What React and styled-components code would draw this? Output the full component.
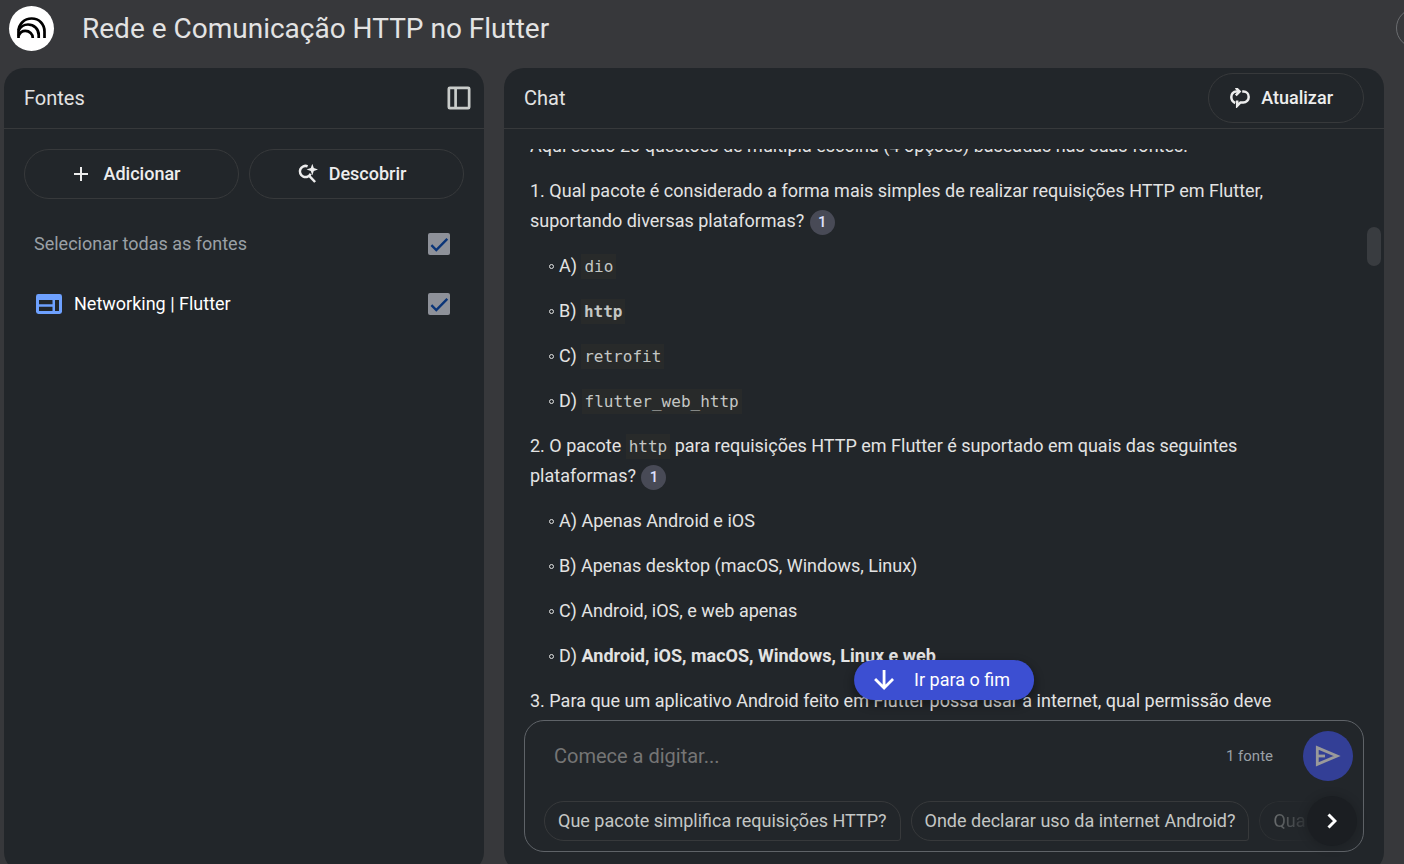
import React from "react";
import styled, { createGlobalStyle } from "styled-components";

const Global = createGlobalStyle`
  *, *::before, *::after { box-sizing: border-box; }
  body {
    margin: 0;
    overflow: hidden;
    background: #37383b;
    color: #e3e3e3;
    font: 400 18px/30px Roboto, "Open Sans", sans-serif;
  }
  button, input { font: inherit; color: inherit; }
  h1, h2, p, ul { margin: 0; padding: 0; font-weight: 400; }
  svg { display: block; flex: none; }
`;

const Shell = styled.div`
  display: flex;
  flex-direction: column;
  height: calc(100vh + 8px);
`;

const TopBar = styled.header`
  display: flex;
  align-items: center;
  height: 56px;
  margin-bottom: 12px;
  padding-left: 9px;
  overflow: hidden;
`;

const Brand = styled.a`
  display: grid;
  place-items: center;
  width: 45px;
  height: 45px;
  border-radius: 50%;
  background: #fff;
`;

const Title = styled.h1`
  flex: 1;
  margin-left: 28px;
  padding-top: 2px;
  font-size: 28px;
  line-height: 36px;
`;

const Avatar = styled.button`
  width: 40px;
  height: 40px;
  margin-right: -32px;
  border: 1px solid #6b6d70;
  border-radius: 50%;
  background: none;
`;

const Columns = styled.main`
  flex: 1;
  min-height: 0;
  display: grid;
  grid-template-columns: 480px minmax(0, 1fr);
  gap: 20px;
  padding: 0 20px 0 4px;
`;

const Panel = styled.section`
  position: relative;
  display: flex;
  flex-direction: column;
  min-height: 0;
  border-radius: 20px;
  background: #22262a;
`;

const PanelHead = styled.div`
  display: flex;
  align-items: center;
  justify-content: space-between;
  height: 61px;
  padding: 0 20px;
  border-bottom: 1px solid #37393b;
`;

const PanelTitle = styled.h2`
  font-size: 20px;
`;

const IconButton = styled.button`
  display: grid;
  place-items: center;
  width: 30px;
  height: 30px;
  margin-right: -10px;
  padding: 0;
  border: 0;
  background: none;
  color: #c9ccca;
`;

const PillButton = styled.button`
  display: flex;
  align-items: center;
  justify-content: center;
  gap: ${(p) => p.$gap || 10}px;
  height: 50px;
  padding: 0 30px 0 21px;
  border: 1px solid #37393b;
  border-radius: 25px;
  background: none;
  color: #ededed;
  font-weight: 500;
`;

const Actions = styled.div`
  display: grid;
  grid-template-columns: 1fr 1fr;
  gap: 10px;
  padding: 20px 20px 15px;
`;

const SourceRow = styled.label`
  display: flex;
  align-items: center;
  height: 60px;
  padding: 0 34px 0 ${(p) => (p.$muted ? 30 : 32)}px;
  color: ${(p) => (p.$muted ? "#9aa0a6" : "#fff")};
`;

const SourceName = styled.span`
  flex: 1;
  margin-left: ${(p) => (p.$indent ? 12 : 0)}px;
`;

const CheckWrap = styled.span`
  display: grid;
  width: 22px;
  height: 22px;
  & > * { grid-area: 1 / 1; }
  svg { pointer-events: none; }
`;

const CheckInput = styled.input`
  appearance: none;
  width: 22px;
  height: 22px;
  margin: 0;
  border-radius: 2px;
  background: #8e9199;
`;

const ChatBody = styled.div`
  flex: 1;
  min-height: 0;
  display: flex;
  margin-top: 20px;
  padding: 0 3px 0 26px;
`;

const Messages = styled.div`
  flex: 1;
  min-width: 0;
  display: flex;
  flex-direction: column;
  justify-content: flex-end;
  gap: 15px;
  padding: 0 90px 4px 0;
  overflow: hidden;
`;

const Options = styled.ul`
  display: flex;
  flex-direction: column;
  gap: 15px;
  padding-left: 19px;
  list-style: none;
`;

const OptionItem = styled.li`
  display: flex;
  align-items: center;
  gap: 5px;
  height: 30px;
  &::before {
    content: "";
    width: 5px;
    height: 5px;
    border: 1px solid #e3e3e3;
    border-radius: 50%;
  }
`;

const Code = styled.code`
  padding: 3px;
  background: #282a2a;
  color: #c4c7c5;
  font-family: "DejaVu Sans Mono", monospace;
  font-size: 16px;
  line-height: 20px;
`;

const Citation = styled.button`
  width: 25px;
  height: 25px;
  margin-left: 1px;
  padding: 0;
  border: 0;
  border-radius: 50%;
  background: #484a56;
  color: #dfe1ff;
  font-size: 15px;
  font-weight: 500;
  line-height: 25px;
  vertical-align: middle;
`;

const Rail = styled.div`
  width: 14px;
  padding-top: 78px;
`;

const Thumb = styled.div`
  height: 39px;
  border-radius: 7px;
  background: #393c40;
`;

const JumpButton = styled.button`
  position: absolute;
  left: 50%;
  bottom: 172px;
  transform: translateX(-50%);
  display: flex;
  align-items: center;
  gap: 20px;
  height: 40px;
  padding: 0 24px 0 20px;
  border: 0;
  border-radius: 20px;
  background: #3c4fd2;
  color: #fff;
  box-shadow: 0 4px 8px 2px rgba(0, 0, 0, 0.3);
  white-space: nowrap;
`;

const Composer = styled.form`
  height: 132px;
  margin: 0 20px 20px;
  padding: 10px 10px 10px 19px;
  border: 1px solid #5f6368;
  border-radius: 20px;
`;

const EntryRow = styled.div`
  display: flex;
  align-items: center;
  height: 50px;
  margin-bottom: 20px;
`;

const Entry = styled.input`
  flex: 1;
  min-width: 0;
  height: 40px;
  padding: 0 10px;
  border: 0;
  outline: 0;
  background: none;
  font-size: 20px;
  &::placeholder { color: #757575; opacity: 1; }
`;

const SourceCount = styled.span`
  margin-right: 30px;
  color: #9aa0a6;
  font-size: 15px;
`;

const Send = styled.button`
  display: grid;
  place-items: center;
  width: 50px;
  height: 50px;
  padding: 0;
  border: 0;
  border-radius: 50%;
  background: #333f96;
  color: #9a9a9a;
`;

const Suggestions = styled.div`
  position: relative;
  display: flex;
  gap: 10px;
  height: 40px;
`;

const Chip = styled.button`
  flex: none;
  height: 40px;
  padding: 0 13px;
  border: 1px solid #37393b;
  border-radius: 20px 20px 3px 20px;
  background: none;
  color: #c4c7c5;
  white-space: nowrap;
`;

const LastChip = styled(Chip)`
  flex: 1 1 0;
  min-width: 0;
  overflow: hidden;
  text-align: left;
  border-right: 0;
  mask-image: linear-gradient(90deg, rgba(0, 0, 0, 0.6), transparent 56px);
`;

const NextButton = styled.button`
  position: absolute;
  right: -4px;
  top: -5px;
  display: grid;
  place-items: center;
  width: 50px;
  height: 50px;
  padding: 0;
  border: 0;
  border-radius: 50%;
  background: #1b1e22;
  color: #fff;
  box-shadow: 0 1px 8px 3px rgba(0, 0, 0, 0.12);
`;

function Option({ children }) {
  return (
    <OptionItem>
      <span>{children}</span>
    </OptionItem>
  );
}

function Check(props) {
  return (
    <CheckWrap>
      <CheckInput type="checkbox" defaultChecked {...props} />
      <svg width="22" height="22" viewBox="0 0 22 22" fill="none" stroke="#0b3578" strokeWidth="2.4">
        <path d="M3.4 12.2 8.3 17 19.3 5.8" />
      </svg>
    </CheckWrap>
  );
}

export default function App() {
  return (
    <Shell>
      <Global />
      <TopBar>
        <Brand href="#" aria-label="NotebookLM">
          <svg width="29" height="22" viewBox="0 0 29 22" fill="none" stroke="#000" strokeWidth="2.7">
            <path d="M1.500 21V14.500C1.500 7 7.300 1.500 14.700 1.500S27.500 7 27.500 14.500V21" />
            <path d="M1.500 13.500C3.600 9.600 7 7.500 11 7.500c6 0 10.700 4.400 10.700 10.400V21" />
            <path d="M1.500 19C2.800 15.700 5.200 13.900 8.300 13.900c4.300 0 7.500 3 7.500 7.100" />
          </svg>
        </Brand>
        <Title>Rede e Comunicação HTTP no Flutter</Title>
        <Avatar aria-label="Conta" />
      </TopBar>
      <Columns>
        <Panel>
          <PanelHead>
            <PanelTitle>Fontes</PanelTitle>
            <IconButton aria-label="Recolher painel">
              <svg width="24" height="24" viewBox="0 0 24 24" fill="none" stroke="currentColor" strokeWidth="2.700">
                <rect x="1.850" y="1.850" width="20.300" height="20.300" rx="1" />
                <path d="M8.600 2v20" />
              </svg>
            </IconButton>
          </PanelHead>
          <Actions>
            <PillButton $gap={16}>
              <svg width="14" height="14" viewBox="0 0 14 14" stroke="currentColor" strokeWidth="2">
                <path d="M7 0v14M0 7h14" />
              </svg>
              Adicionar
            </PillButton>
            <PillButton $gap={11}>
              <svg width="20" height="20" viewBox="0 0 20 20" fill="none" stroke="currentColor" strokeWidth="2.500">
                <path d="M9.600 2.300A5.600 5.600 0 1 0 12.600 9.800" />
                <path d="m10.800 11.400 6.300 6.600" />
                <path d="M14.300-.2l1.500 4.300 4.200 1.500-4.200 1.500-1.500 4.200-1.500-4.200L8.600 5.600l4.200-1.500z" fill="currentColor" stroke="none" />
              </svg>
              Descobrir
            </PillButton>
          </Actions>
          <SourceRow $muted>
            <SourceName>Selecionar todas as fontes</SourceName>
            <Check />
          </SourceRow>
          <SourceRow>
            <svg width="26" height="20" viewBox="0 0 26 20">
              <rect width="26" height="20" rx="2.400" fill="#6ea1ff" />
              <path d="M3 6h13.500v4.200H3zM3 12.800h13.500v4.200H3zM19 6h4v11h-4z" fill="#22262a" />
            </svg>
            <SourceName $indent>Networking | Flutter</SourceName>
            <Check />
          </SourceRow>
        </Panel>
        <Panel>
          <PanelHead>
            <PanelTitle>Chat</PanelTitle>
            <PillButton $gap={11}>
              <svg width="20" height="20" viewBox="0 0 20 20" fill="none" stroke="currentColor" strokeWidth="2.500">
                <path d="M5.200 15C2.700 13.800 1.300 11.800 1.300 9c0-3 2.100-5.400 5-5.400H9" />
                <path d="m5.800-.2 3.800 3.800-3.800 3.800" />
                <path d="M12.200 3.600h1.300c3 0 5.200 2.300 5.200 5.300s-2.400 5.500-5.400 5.500H10.500L7.200 17.800V12.500" />
              </svg>
              Atualizar
            </PillButton>
          </PanelHead>
          <ChatBody>
            <Messages>
              <p>Aqui estão 20 questões de múltipla escolha (4 opções) baseadas nas suas fontes:</p>
              <p>
                1. Qual pacote é considerado a forma mais simples de realizar requisições HTTP em Flutter,
                suportando diversas plataformas? <Citation>1</Citation>
              </p>
              <Options>
                <Option>A) <Code>dio</Code></Option>
                <Option>B) <Code><b>http</b></Code></Option>
                <Option>C) <Code>retrofit</Code></Option>
                <Option>D) <Code>flutter_web_http</Code></Option>
              </Options>
              <p>
                2. O pacote <Code>http</Code> para requisições HTTP em Flutter é suportado em quais das seguintes
                plataformas? <Citation>1</Citation>
              </p>
              <Options>
                <Option>A) Apenas Android e iOS</Option>
                <Option>B) Apenas desktop (macOS, Windows, Linux)</Option>
                <Option>C) Android, iOS, e web apenas</Option>
                <Option>D) <b>Android, iOS, macOS, Windows, Linux e web</b></Option>
              </Options>
              <p>3. Para que um aplicativo Android feito em Flutter possa usar a internet, qual permissão deve</p>
            </Messages>
            <Rail>
              <Thumb />
            </Rail>
          </ChatBody>
          <JumpButton>
            <svg width="20" height="20" viewBox="0 0 20 20" fill="none" stroke="currentColor" strokeWidth="2.800">
              <path d="M10 0v18M1 9l9 9 9-9" />
            </svg>
            Ir para o fim
          </JumpButton>
          <Composer>
            <EntryRow>
              <Entry placeholder="Comece a digitar..." aria-label="Caixa de consulta" />
              <SourceCount>1 fonte</SourceCount>
              <Send type="button" aria-label="Enviar">
                <svg width="26" height="22" viewBox="0 0 26 22" fill="none" stroke="currentColor" strokeWidth="2.800">
                  <path d="M2.300 2.700v16.600L22 11z" />
                  <path d="M2.500 11H10" />
                </svg>
              </Send>
            </EntryRow>
            <Suggestions>
              <Chip type="button">Que pacote simplifica requisições HTTP?</Chip>
              <Chip type="button">Onde declarar uso da internet Android?</Chip>
              <LastChip type="button">Qua</LastChip>
              <NextButton type="button" aria-label="Próximo">
                <svg width="10" height="16" viewBox="0 0 10 16" fill="none" stroke="currentColor" strokeWidth="3">
                  <path d="m1.500 1.500 6.500 6.500-6.500 6.500" />
                </svg>
              </NextButton>
            </Suggestions>
          </Composer>
        </Panel>
      </Columns>
    </Shell>
  );
}
